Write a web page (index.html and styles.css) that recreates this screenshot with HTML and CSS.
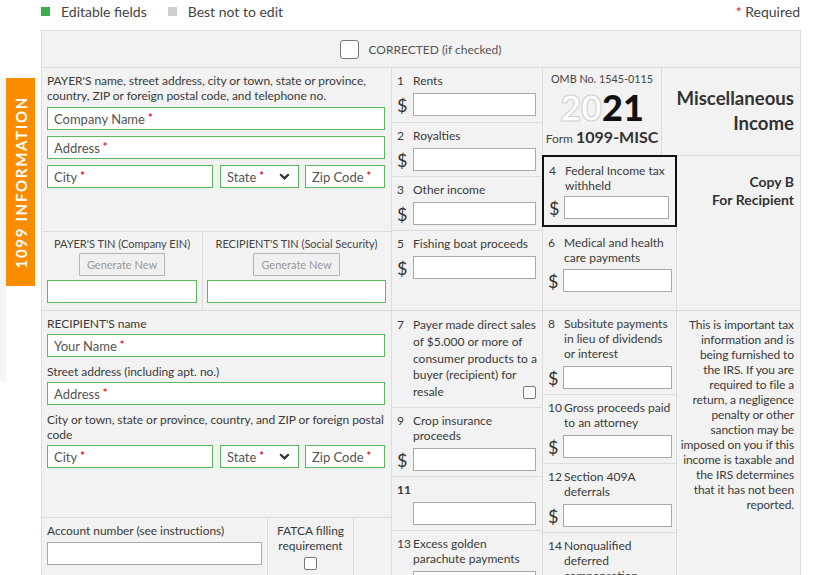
FILE: index.html
```html
<!DOCTYPE html>
<html lang="en">
<head>
<meta charset="utf-8">
<title>1099-MISC</title>
<link rel="stylesheet" href="styles.css">
</head>
<body>
<div class="rail"></div>
<div class="sidetab"><span>1099 INFORMATION</span></div>

<div class="page">
  <div class="legend">
    <div class="item"><span class="sq green"></span>Editable fields</div>
    <div class="item"><span class="sq gray"></span>Best not to edit</div>
    <div class="req"><b>*</b> Required</div>
  </div>

  <div class="form">
    <div class="corrected"><span class="cb big"></span>CORRECTED (if checked)</div>

    <div class="main">
      <!-- left column, upper -->
      <div class="col la">
        <div class="cell payer">
          <p class="plabel">PAYER'S name, street address, city or town, state or province, country, ZIP or foreign postal code, and telephone no.</p>
          <label class="field"><span class="ph">Company Name<em>*</em></span><input type="text"></label>
          <label class="field mt6"><span class="ph">Address<em>*</em></span><input type="text"></label>
          <div class="cityrow mt6">
            <label class="field city"><span class="ph">City<em>*</em></span><input type="text"></label>
            <div class="field state"><span class="ph">State<em>*</em></span><svg class="chev" width="11" height="7" viewBox="0 0 11 7"><path d="M1.2 1.2 L5.5 5.4 L9.8 1.2" fill="none" stroke="#333" stroke-width="2.2"/></svg></div>
            <label class="field zip"><span class="ph">Zip Code<em>*</em></span><input type="text"></label>
          </div>
        </div>
        <div class="tinrow">
          <div class="cell tin t1">
            <div class="tinlabel">PAYER'S TIN (Company EIN)</div>
            <button class="gen" type="button">Generate New</button>
            <label class="field"><input type="text"></label>
          </div>
          <div class="cell tin t2">
            <div class="tinlabel">RECIPIENT'S TIN (Social Security)</div>
            <button class="gen" type="button">Generate New</button>
            <label class="field"><input type="text"></label>
          </div>
        </div>
      </div>

      <!-- column 2, upper -->
      <div class="col c2a">
        <div class="cell box h55">
          <div class="lbl"><span class="num">1</span><span class="txt">Rents</span></div>
          <div class="money"><span class="dollar">$</span><input class="gi" type="text"></div>
        </div>
        <div class="cell box h54">
          <div class="lbl"><span class="num">2</span><span class="txt">Royalties</span></div>
          <div class="money"><span class="dollar">$</span><input class="gi" type="text"></div>
        </div>
        <div class="cell box h54">
          <div class="lbl"><span class="num">3</span><span class="txt">Other income</span></div>
          <div class="money"><span class="dollar">$</span><input class="gi" type="text"></div>
        </div>
        <div class="cell box h80">
          <div class="lbl"><span class="num">5</span><span class="txt">Fishing boat proceeds</span></div>
          <div class="money"><span class="dollar">$</span><input class="gi" type="text"></div>
        </div>
      </div>

      <!-- columns 3 + 4, upper -->
      <div class="col c34a">
        <div class="toprow">
          <div class="cell omb">
            <div class="ombno">OMB No. 1545-0115</div>
            <div class="year"><span class="ghost">20</span>21</div>
            <div class="formname">Form <b>1099-MISC</b></div>
          </div>
          <div class="cell misc">Miscellaneous<br>Income</div>
        </div>
        <div class="botrow">
          <div class="col c3">
            <div class="cell box box4">
              <div class="lbl"><span class="num">4</span><span class="txt">Federal Income tax withheld</span></div>
              <div class="money"><span class="dollar">$</span><input class="gi w105" type="text"></div>
            </div>
            <div class="cell box box6 h84">
              <div class="lbl"><span class="num">6</span><span class="txt">Medical and health care payments</span></div>
              <div class="money mt4"><span class="dollar">$</span><input class="gi w109" type="text"></div>
            </div>
          </div>
          <div class="cell copyb">Copy B<br>For Recipient</div>
        </div>
      </div>

      <!-- left column, lower -->
      <div class="col lb">
        <div class="cell recip">
          <div class="rlabel">RECIPIENT'S name</div>
          <label class="field mt3"><span class="ph">Your Name<em>*</em></span><input type="text"></label>
          <div class="rlabel mt7">Street address (including apt. no.)</div>
          <label class="field mt3"><span class="ph">Address<em>*</em></span><input type="text"></label>
          <div class="rlabel mt7">City or town, state or province, country, and ZIP or foreign postal<br>code</div>
          <div class="cityrow mt3">
            <label class="field city"><span class="ph">City<em>*</em></span><input type="text"></label>
            <div class="field state"><span class="ph">State<em>*</em></span><svg class="chev" width="11" height="7" viewBox="0 0 11 7"><path d="M1.2 1.2 L5.5 5.4 L9.8 1.2" fill="none" stroke="#333" stroke-width="2.2"/></svg></div>
            <label class="field zip"><span class="ph">Zip Code<em>*</em></span><input type="text"></label>
          </div>
        </div>
        <div class="acctrow">
          <div class="cell acct">
            <div class="rlabel">Account number (see instructions)</div>
            <input class="gi wide mt4" type="text">
          </div>
          <div class="cell fatca">
            <div>FATCA filling<br>requirement</div>
            <span class="cb small"></span>
          </div>
          <div class="cell empty"></div>
        </div>
      </div>

      <!-- column 2, lower -->
      <div class="col c2b">
        <div class="cell box h97">
          <div class="lbl l17"><span class="num">7</span><span class="txt">Payer made direct sales<br>of $5.000 or more of<br>consumer products to a<br>buyer (recipient) for<br><span class="lastline">resale<span class="cb small"></span></span></span></div>
        </div>
        <div class="cell box h69">
          <div class="lbl"><span class="num">9</span><span class="txt">Crop insurance<br>proceeds</span></div>
          <div class="money mt4"><span class="dollar">$</span><input class="gi" type="text"></div>
        </div>
        <div class="cell box h54">
          <div class="lbl"><span class="num bold">11</span><span class="txt"></span></div>
          <div class="money mt6"><span class="dollar"></span><input class="gi" type="text"></div>
        </div>
        <div class="cell box h80">
          <div class="lbl"><span class="num">13</span><span class="txt">Excess golden<br>parachute payments</span></div>
          <div class="money mt4"><span class="dollar">$</span><input class="gi" type="text"></div>
        </div>
      </div>

      <!-- column 3, lower -->
      <div class="col c3b">
        <div class="cell box h84">
          <div class="lbl"><span class="num">8</span><span class="txt">Subsitute payments in lieu of dividends or interest</span></div>
          <div class="money mt4"><span class="dollar">$</span><input class="gi w109" type="text"></div>
        </div>
        <div class="cell box h69">
          <div class="lbl"><span class="num">10</span><span class="txt">Gross proceeds paid to an attorney</span></div>
          <div class="money mt5"><span class="dollar">$</span><input class="gi w109" type="text"></div>
        </div>
        <div class="cell box h69">
          <div class="lbl"><span class="num">12</span><span class="txt">Section 409A deferrals</span></div>
          <div class="money mt5"><span class="dollar">$</span><input class="gi w109" type="text"></div>
        </div>
        <div class="cell box h80">
          <div class="lbl"><span class="num">14</span><span class="txt">Nonqualified<br>deferred<br>compensation</span></div>
          <div class="money mt4"><span class="dollar">$</span><input class="gi w109" type="text"></div>
        </div>
      </div>

      <!-- column 4, lower -->
      <div class="col c4b">
        <div class="cell notice">This is important tax<br>information and is<br>being furnished to<br>the IRS. If you are<br>required to file a<br>return, a negligence<br>penalty or other<br>sanction may be<br>imposed on you if this<br>income is taxable and<br>the IRS determines<br>that it has not been<br>reported.</div>
      </div>
    </div>
  </div>
</div>
</body>
</html>
```

FILE: styles.css
```css
* { box-sizing: border-box; }
html, body { margin: 0; padding: 0; }
body {
  font-family: Lato, "Open Sans", "Liberation Sans", sans-serif;
  font-size: 12px;
  color: #3a3a3a;
  background: #fff;
}
p { margin: 0; }

/* side decoration */
.rail {
  position: absolute;
  left: 0; top: 78px;
  width: 6px; height: 304px;
  background: #f5f5f5;
}
.sidetab {
  position: absolute;
  left: 6px; top: 78px;
  width: 29px; height: 208px;
  background: #fb8c00;
  display: flex;
  align-items: center;
  justify-content: center;
}
.sidetab span {
  writing-mode: vertical-rl;
  transform: rotate(180deg);
  color: #fff;
  font-weight: 700;
  font-size: 15px;
  letter-spacing: 1.7px;
  white-space: nowrap;
}

.page { padding: 0 31px 0 41px; }

/* legend */
.legend {
  height: 30px;
  padding-top: 3px;
  display: flex;
  align-items: flex-start;
  line-height: 17px;
  font-size: 14px;
  color: #444;
}
.legend .item { display: flex; align-items: center; }
.legend .item + .item { margin-left: 21px; }
.sq { width: 9px; height: 9px; margin-right: 11px; display: inline-block; }
.sq.green { background: #3fae49; }
.sq.gray { background: #cecece; }
.req { margin-left: auto; }
.req b { color: #e3172b; font-weight: 400; }

/* form */
.form {
  width: 760px;
  background: #f2f2f2;
  border-top: 1px solid #dcdcdc;
  border-left: 1px solid #dcdcdc;
}
.cell {
  border-right: 1px solid #dcdcdc;
  border-bottom: 1px solid #dcdcdc;
}
.corrected {
  height: 37px;
  border-right: 1px solid #dcdcdc;
  border-bottom: 1px solid #dcdcdc;
  display: flex;
  align-items: center;
  justify-content: center;
  font-size: 12px;
  color: #555;
}
.cb {
  display: inline-block;
  background: #fff;
  border: 1px solid #777;
}
.cb.big { width: 19px; height: 19px; border-radius: 3px; margin-right: 9px; }
.cb.small { width: 13px; height: 13px; border-radius: 2px; }

.main {
  display: grid;
  grid-template-columns: 350px 151px 134px 124px;
  grid-template-rows: 243px auto;
}
.col { display: flex; flex-direction: column; }
.c34a { grid-column: 3 / 5; }

/* generic field */
.field {
  position: relative;
  display: flex;
  align-items: center;
  height: 23px;
  background: #fff;
  border: 1px solid #5cb85c;
  padding: 0 6px;
  font-size: 13px;
  color: #555;
}
.field input {
  position: absolute;
  inset: 0;
  width: 100%;
  border: 0;
  background: transparent;
  outline: none;
}
.ph { white-space: nowrap; }
.ph em {
  font-style: normal;
  font-weight: 700;
  color: #e3172b;
  font-size: 11px;
  margin-left: 3px;
  position: relative;
  top: -2px;
}
.mt3 { margin-top: 3px; }
.mt4 { margin-top: 4px; }
.mt5 { margin-top: 5px; }
.mt6 { margin-top: 6px; }
.mt7 { margin-top: 7px; }

/* payer */
.payer { height: 164px; padding: 5px 6px 0 5px; }
.plabel { line-height: 15px; margin-bottom: 4px; color: #3a3a3a; letter-spacing: -0.05px; }
.cityrow { display: flex; gap: 6px; }
.cityrow .city { width: 166px; }
.cityrow .state { width: 79px; margin-left: 1px; justify-content: space-between; padding-right: 8px; }
.cityrow .zip { flex: 1; }
.chev { display: block; }

.tinrow { display: flex; height: 79px; }
.tin { height: 79px; display: flex; flex-direction: column; align-items: center; padding-top: 4px; }
.t1 { width: 161px; padding-left: 5px; padding-right: 5px; }
.t2 { width: 189px; padding-left: 4px; padding-right: 5px; }
.tinlabel { line-height: 15px; font-size: 11px; color: #444; white-space: nowrap; }
.gen {
  margin-top: 2px;
  height: 23px;
  padding: 0 7px;
  font-family: inherit;
  font-size: 11px;
  color: #999;
  background: #f0f0f0;
  border: 1px solid #b4b4b4;
  border-radius: 1px;
}
.tin .field { margin-top: 4px; width: 100%; }

/* boxes */
.box { padding: 5px 5px 0 5px; }
.h54 { height: 54px; }
.h55 { height: 55px; }
.h69 { height: 69px; }
.h80 { height: 80px; }
.h84 { height: 84px; }
.h97 { height: 97px; }
.lbl { display: flex; line-height: 15px; color: #3a3a3a; }
.lbl.l17 { line-height: 16.8px; padding-top: 1px; }
.num { width: 16px; flex: none; }
.num.bold { font-weight: 700; }
.txt { flex: 1; }
.lastline { display: flex; justify-content: space-between; align-items: center; padding-right: 1px; }
.money { display: flex; align-items: center; margin-top: 5px; }
.dollar { width: 16px; flex: none; font-size: 18px; color: #333; }
.gi {
  width: 123px;
  height: 23px;
  border: 1px solid #a9a9a9;
  background: #fff;
  font-family: inherit;
  padding: 0 4px;
}
.gi.w105 { width: 105px; }
.gi.w109 { width: 109px; }
.gi.wide { width: 215px; }
.c3b .dollar, .c3 .dollar { width: 15px; }

/* header cells */
.toprow { display: flex; height: 88px; }
.omb { width: 119px; display: flex; flex-direction: column; align-items: center; padding-top: 3px; }
.ombno { font-size: 10.8px; color: #444; line-height: 15px; }
.year {
  font-size: 36px;
  font-weight: 900;
  line-height: 32px;
  color: #111;
  margin-top: 5px;
}
.ghost { color: #fff; -webkit-text-stroke: 1px #cfcfcf; }
.formname { font-size: 12px; color: #444; margin-top: 4px; }
.formname b { font-size: 16px; font-weight: 700; color: #333; }
.misc {
  flex: 1;
  text-align: right;
  font-weight: 700;
  font-size: 18.6px;
  line-height: 25px;
  color: #333;
  padding: 18px 6px 0 0;
}
.botrow { display: flex; height: 155px; }
.c3 { width: 134px; }
.box4 {
  height: 72px;
  margin-top: -1px;
  margin-left: -1px;
  width: 135px;
  border: 2px solid #111;
  padding: 6px 5px 0 5px;
}
.box4 .money { margin-top: 3px; }
.box6 { padding-top: 8px; }
.box6 .money { margin-top: 4px; }
.copyb {
  flex: 1;
  text-align: right;
  font-weight: 700;
  font-size: 14px;
  line-height: 18px;
  color: #333;
  padding: 17px 6px 0 0;
}

/* recipient */
.recip { height: 207px; padding: 5px 6px 0 5px; }
.rlabel { line-height: 15px; color: #3a3a3a; white-space: nowrap; letter-spacing: -0.05px; }
.acctrow { display: flex; height: 90px; }
.acct { width: 226px; padding: 5px 5px 0 5px; }
.fatca {
  width: 86px;
  text-align: center;
  line-height: 15px;
  padding-top: 5px;
  display: flex;
  flex-direction: column;
  align-items: center;
}
.fatca .cb { margin-top: 4px; }
.empty { flex: 1; }

/* notice */
.notice {
  height: 300px;
  text-align: right;
  line-height: 15px;
  padding: 6px 6px 0 0;
  color: #3a3a3a;
  letter-spacing: -0.1px;
}
```
